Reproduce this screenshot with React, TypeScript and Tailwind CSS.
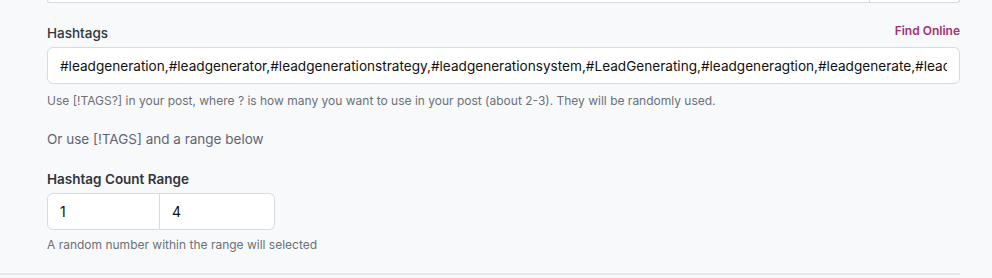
import React, { useState } from 'react';

const tags =
  '#leadgeneration,#leadgenerator,#leadgenerationstrategy,#leadgenerationsystem,#LeadGenerating,#leadgeneragtion,#leadgenerate,#leadgenerationexpert,#leadgenerationtips';

const App: React.FC = () => {
  const [hashtags, setHashtags] = useState(tags);
  const [min, setMin] = useState('1');
  const [max, setMax] = useState('4');

  return (
    <div
      className="min-h-screen bg-[#f8f9fb] pr-[32px]"
      style={{ fontFamily: 'Inter, "Noto Sans", "Liberation Sans", sans-serif' }}
    >
      <div className="border-b-2 border-[#e6e8ec] pl-[47px] pb-[20px]">
        {/* tail of the field above */}
        <div className="flex h-[3px] rounded-b-md border border-t-0 border-[#d7dae0] bg-white">
          <div className="flex-1 border-r border-[#d7dae0]" />
          <div className="w-[89px]" />
        </div>

        <div className="mt-[20px] flex items-start justify-between">
          <label className="text-[13.5px] leading-[20px] font-medium text-[#30343b]">Hashtags</label>
          <a className="text-[12px] leading-[16px] font-semibold text-[#a1326f]">Find Online</a>
        </div>

        <input
          value={hashtags}
          onChange={e => setHashtags(e.target.value)}
          className="mt-[4px] block h-[37px] w-full rounded-md border border-[#d7dae0] bg-white px-[12px] text-[13.6px] text-[#111] outline-none"
        />
        <p className="mt-[9px] text-[12px] leading-[16px] text-[#6b7079]">
          Use [!TAGS?] in your post, where ? is how many you want to use in your post (about 2-3). They will be randomly used.
        </p>

        <p className="mt-[20px] text-[13.5px] leading-[20px] text-[#5f6570]">Or use [!TAGS] and a range below</p>

        <label className="mt-[20px] block text-[13.5px] leading-[20px] font-semibold text-[#30343b]">
          Hashtag Count Range
        </label>
        <div className="mt-[4px] flex w-[228px]">
          <input
            value={min}
            onChange={e => setMin(e.target.value)}
            className="h-[37px] w-[113px] rounded-l-md border border-[#d7dae0] bg-white px-[12px] text-[14px] text-[#111] outline-none"
          />
          <input
            value={max}
            onChange={e => setMax(e.target.value)}
            className="h-[37px] w-[115px] rounded-r-md border border-l-0 border-[#d7dae0] bg-white px-[12px] text-[14px] text-[#111] outline-none"
          />
        </div>
        <p className="mt-[7px] text-[12px] leading-[16px] text-[#6b7079]">A random number within the range will selected</p>
      </div>
    </div>
  );
};

export default App;
